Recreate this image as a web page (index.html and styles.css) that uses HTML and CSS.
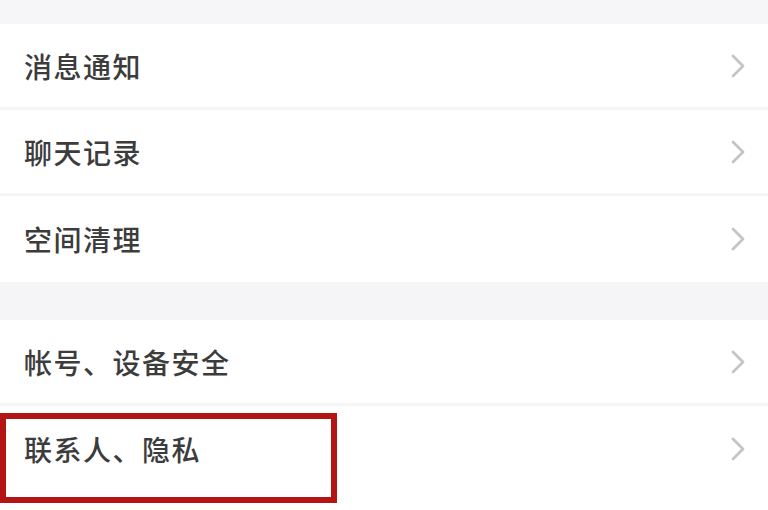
FILE: index.html
```html
<!DOCTYPE html>
<html lang="zh">
<head>
<meta charset="utf-8">
<link rel="stylesheet" href="styles.css">
</head>
<body>
<div class="page">
  <div class="topband"></div>
  <div class="group">
    <div class="row"><span class="label">消息通知</span><svg class="chev" viewBox="0 0 16 26"><polyline points="3,3 13,13 3,23"/></svg></div>
    <div class="row"><span class="label">聊天记录</span><svg class="chev" viewBox="0 0 16 26"><polyline points="3,3 13,13 3,23"/></svg></div>
    <div class="row"><span class="label">空间清理</span><svg class="chev" viewBox="0 0 16 26"><polyline points="3,3 13,13 3,23"/></svg></div>
  </div>
  <div class="gap"></div>
  <div class="group">
    <div class="row"><span class="label">帐号、设备安全</span><svg class="chev" viewBox="0 0 16 26"><polyline points="3,3 13,13 3,23"/></svg></div>
    <div class="row highlighted"><span class="label">联系人、隐私</span><svg class="chev" viewBox="0 0 16 26"><polyline points="3,3 13,13 3,23"/></svg><div class="mark"></div></div>
  </div>
</div>
</body>
</html>
```
FILE: styles.css
```css
html, body {
  margin: 0;
  padding: 0;
  background: #ffffff;
}
.page {
  width: 768px;
  height: 510px;
  overflow: hidden;
  font-family: "Noto Sans CJK SC", "Noto Sans", sans-serif;
  background: #ffffff;
}
.topband {
  height: 24px;
  background: #f6f6f8;
}
.gap {
  height: 38px;
  background: #f5f5f7;
}
.group {
  background: #ffffff;
}
.row {
  position: relative;
  height: 86px;
  box-sizing: border-box;
  display: flex;
  align-items: center;
  justify-content: space-between;
  padding: 0 22px 0 24px;
  border-bottom: 3px solid #f5f5f6;
}
.group .row:last-child {
  border-bottom: none;
}
.label {
  font-size: 28px;
  font-weight: 500;
  color: #3c3c3c;
  letter-spacing: 1.5px;
}
.chev {
  width: 16px;
  height: 26px;
}
.chev polyline {
  fill: none;
  stroke: #c4c4c4;
  stroke-width: 2.8;
  stroke-linecap: round;
  stroke-linejoin: round;
}
.mark {
  position: absolute;
  left: 0;
  top: 7px;
  width: 337px;
  height: 90px;
  box-sizing: border-box;
  border: 6px solid #b31515;
}
```
